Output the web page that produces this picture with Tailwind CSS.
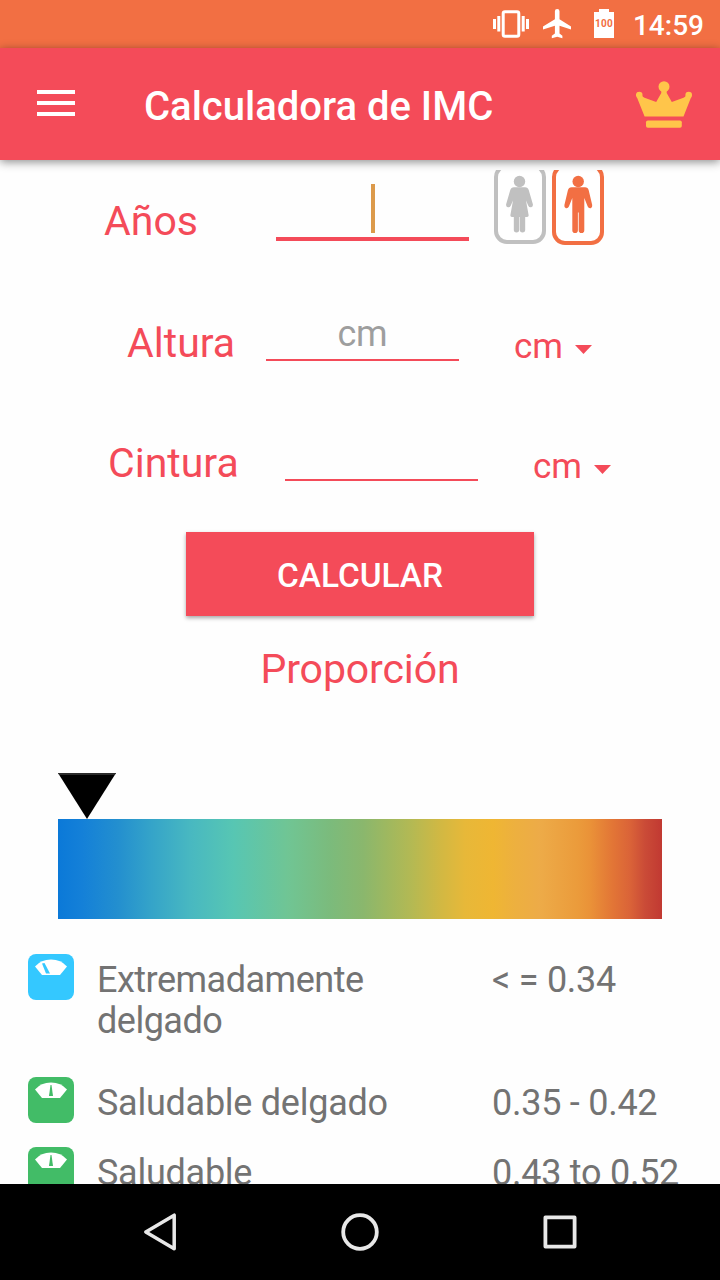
<!DOCTYPE html>
<html lang="es">

<head>
  <meta charset="UTF-8" />
  <meta name="viewport" content="width=device-width, initial-scale=1.0" />
  <title>Calculadora de IMC</title>
  <script src="https://cdn.jsdelivr.net/npm/@tailwindcss/browser@4"></script>
</head>

<body class="w-[720px] h-[1280px] flex flex-col overflow-hidden bg-[#fefefe] font-['Roboto',sans-serif] text-[#f44b59]">

  <!-- Status bar -->
  <div class="h-12 shrink-0 flex items-center justify-end bg-[#f26f43] pr-4 text-white">
    <svg class="w-9 h-12 mr-[14px]" viewBox="0 0 36 48" fill="currentColor">
      <rect x="10.200" y="11.700" width="15.600" height="24.600" rx="1.800" fill="none" stroke="currentColor" stroke-width="3" />
      <path d="M0 19h3v10H0zM4.300 16h3v15.500h-3zM28.700 16h3v15.500h-3zM33 19h3v10h-3z" />
    </svg>
    <svg class="w-7 h-12 mr-[23px]" viewBox="0 0 28 48" fill="currentColor">
      <path d="M28 29.500v-3L16.500 19.300v-8a2.300 2.300 0 0 0-4.600 0v8L0 26.500v3l11.900-3.700v7.700L8.800 35.800v2.400l5.400-1.400 5.200 1.400v-2.400l-2.900-2.300v-7.700z" />
    </svg>
    <div class="w-5 h-[29px] mr-[19px] mb-[1px] flex flex-col items-center">
      <div class="w-2.5 h-[3px] bg-white"></div>
      <div class="w-5 h-[26px] bg-white text-center text-[10px] leading-[24px] font-bold text-[#f26f43] tracking-[0.3px]">100</div>
    </div>
    <span class="text-[28px] font-medium leading-none pt-[3px]">14:59</span>
  </div>

  <!-- App bar -->
  <header class="relative z-10 h-28 shrink-0 flex items-center bg-[#f44b59] pl-[37px] pr-[27px] text-white shadow-[0_2px_9px_rgba(0,0,0,0.45)]">
    <svg class="w-[38px] h-[26px] mb-[2px]" viewBox="0 0 38 26" fill="currentColor">
      <path d="M0 0h38v4H0zM0 11h38v4H0zM0 22h38v4H0z" />
    </svg>
    <h1 class="ml-[69px] grow text-[40px] leading-[48px] pt-1.5 font-medium">Calculadora de IMC</h1>
    <svg class="w-[57px] h-[47px]" viewBox="0 0 57 47" fill="#ffc54a">
      <circle cx="28" cy="5.700" r="5.500" />
      <circle cx="3.200" cy="14" r="3.300" />
      <circle cx="52.700" cy="14" r="3.300" />
      <path d="M.8 16L6 14.500q.6 1.500 2.500 2.200L20.200 21 25.300 12V9h5.400v3L35.800 21l11.700-4.300Q49.400 16 50 14.500l5.200 1.500L47.500 35.500H8.600z" />
      <rect x="10" y="39.500" width="35.800" height="7.200" rx="1.800" />
    </svg>
  </header>

  <main class="grow overflow-hidden pt-2.5">
    <div class="h-full overflow-hidden">

      <!-- Age and gender -->
      <div class="h-[120px] flex items-start pl-[104px]">
        <label class="w-[172px] pt-[27px] text-[41px] leading-[48px]">Años</label>
        <div class="w-[193px] h-[71px] flex justify-center pt-3.5 border-b-4 border-[#f44b59]">
          <div class="w-1 h-[49px] bg-[#dc9a4b]"></div>
        </div>
        <svg class="ml-[25px] w-[110px] h-[76px]" viewBox="0 0 110 76">
          <rect x="2" y="-4" width="48" height="76" rx="11" fill="#fff" stroke="#c0c0c0" stroke-width="4" />
          <g fill="#c0c0c0">
            <circle cx="25.500" cy="11.500" r="5.700" />
            <path d="M20 17.300h11q3 0 3.800 3l4 13.700q.6 2.600-1.600 3.300-2 .4-2.900-1.600L32 30.500 34.600 45q.3 2-1.500 2h-1.900v12.700a2.700 2.700 0 0 1-5.400 0V47h-.6v12.700a2.700 2.700 0 0 1-5.400 0V47h-1.900q-1.800 0-1.500-2L19 30.500l-2.300 5.200q-.9 2-2.900 1.600-2.200-.7-1.600-3.300l4-13.700q.8-3 3.800-3z" />
          </g>
          <rect x="60" y="-4" width="48" height="77" rx="11" fill="#fff" stroke="#f26f43" stroke-width="4" />
          <g fill="#f26f43">
            <circle cx="84.200" cy="11.500" r="5.700" />
            <path d="M78 17.300h13q3 0 3.700 3l3.500 14.700q.4 2.500-1.500 3.200-2.200.4-3-1.700L90.300 28v32.200a2.700 2.700 0 0 1-5.600 0V42.500h-.8v17.700a2.700 2.700 0 0 1-5.600 0V28l-3.400 8.500q-.9 2.100-3 1.700-2-.7-1.500-3.200l3.500-14.700q.8-3 3.700-3z" />
          </g>
        </svg>
      </div>

      <!-- Height -->
      <div class="h-[120px] flex items-start pl-[127px]">
        <label class="w-[139px] pt-[29px] text-[41px] leading-[48px]">Altura</label>
        <div class="w-[193px] h-[71px] border-b-2 border-[#f44b59] pt-[23px] text-center text-[36px] leading-[42px] tracking-[-0.3px] text-[#9e9e9e]">cm</div>
        <span class="w-[61px] ml-[55px] pt-[36px] text-[35px] leading-[42px]">cm</span>
        <svg class="w-[17px] h-[9px] mt-[55px]" viewBox="0 0 17 9" fill="currentColor">
          <path d="M0 0h17L8.500 9z" />
        </svg>
      </div>

      <!-- Waist -->
      <div class="h-[122px] flex items-start pl-[108px]">
        <label class="w-[177px] pt-[29px] text-[41px] leading-[48px]">Cintura</label>
        <div class="w-[193px] h-[71px] border-b-2 border-[#f44b59]"></div>
        <span class="w-[61px] ml-[55px] pt-[36px] text-[35px] leading-[42px]">cm</span>
        <svg class="w-[17px] h-[9px] mt-[55px]" viewBox="0 0 17 9" fill="currentColor">
          <path d="M0 0h17L8.500 9z" />
        </svg>
      </div>

      <button class="block w-[348px] h-[84px] mx-auto pt-[5px] bg-[#f44b59] text-white text-[33.4px] font-medium shadow-[0_2px_4px_rgba(0,0,0,0.35)]">CALCULAR</button>

      <h2 class="mt-[29px] text-center text-[41px] leading-[48px] tracking-[-0.1px]">Proporción</h2>

      <!-- Ratio scale -->
      <div class="mt-20 px-[58px]">
        <svg class="block w-[58px] h-[46px]" viewBox="0 0 58 46">
          <path d="M0 0h58L29 46z" />
          <path d="M0 0h58l-1.200 2H1.200z" fill="#2b2b2b" />
        </svg>
        <div class="h-[100px] bg-[linear-gradient(to_right,#0b79d8_0px,#1480d8_24px,#238fcf_60px,#34a3c9_92px,#48b8c1_132px,#57c6b3_175px,#70c594_230px,#7bbb7c_272px,#8ab76d_305px,#9fb85f_330px,#b4b953_354px,#d1b843_382px,#e7b839_407px,#efb633_435px,#edb03f_457px,#edab48_482px,#eb9b3b_520px,#ea9238_532px,#e27536_555px,#da6338_572px,#ca4b37_587px,#c13932_604px)]"></div>
      </div>

      <!-- Ranges -->
      <ul class="mt-[35px] pl-7 text-[36px] leading-[41px] tracking-[-0.26px] text-[#737373]">
        <li class="h-[123px] flex items-start">
          <svg class="w-[46px] h-[46px] shrink-0" viewBox="0 0 46 46">
            <rect width="46" height="46" rx="8" fill="#34c8ff" />
            <path d="M7 12.500Q13 5.500 23 5.500t16 7L32 21H14z" fill="#fff" />
            <path d="M14 9.500l2.500-.5 5.500 10.500h-4z" fill="#34c8ff" />
          </svg>
          <span class="w-[418px] shrink-0 pl-[23px] pr-20 pt-1.5 tracking-[-0.5px]">Extremadamente delgado</span>
          <span class="pt-1.5">&lt; = 0.34</span>
        </li>
        <li class="h-[70px] flex items-start">
          <svg class="w-[46px] h-[46px] shrink-0" viewBox="0 0 46 46">
            <rect width="46" height="46" rx="8" fill="#42bc67" />
            <path d="M7 12.500Q13 5.500 23 5.500t16 7L32 21H14z" fill="#fff" />
            <path d="M22.500 8h1L25 19h-4z" fill="#42bc67" />
          </svg>
          <span class="w-[418px] shrink-0 pl-[23px] pt-1.5">Saludable delgado</span>
          <span class="pt-1.5">0.35 - 0.42</span>
        </li>
        <li class="h-[70px] flex items-start">
          <svg class="w-[46px] h-[46px] shrink-0" viewBox="0 0 46 46">
            <rect width="46" height="46" rx="8" fill="#42bc67" />
            <path d="M7 12.500Q13 5.500 23 5.500t16 7L32 21H14z" fill="#fff" />
            <path d="M22.500 8h1L25 19h-4z" fill="#42bc67" />
          </svg>
          <span class="w-[418px] shrink-0 pl-[23px] pt-1.5">Saludable</span>
          <span class="pt-1.5 whitespace-nowrap">0.43 to 0.52</span>
        </li>
      </ul>
    </div>
  </main>

  <!-- Navigation bar -->
  <nav class="h-24 shrink-0 flex items-center justify-between bg-black px-[140px]">
    <svg class="w-10 h-10" viewBox="0 0 40 40" fill="none" stroke="#e8e8e8" stroke-width="3.500" stroke-linejoin="round">
      <path d="M34.200 3.200v33.600L5.800 20z" />
    </svg>
    <svg class="w-10 h-10" viewBox="0 0 40 40" fill="none" stroke="#e8e8e8" stroke-width="3.800">
      <circle cx="20" cy="20" r="16.800" />
    </svg>
    <svg class="w-10 h-10" viewBox="0 0 40 40" fill="none" stroke="#e8e8e8" stroke-width="3.800" stroke-linejoin="round">
      <path d="M5.400 5.400h29.200v29.200H5.400z" />
    </svg>
  </nav>

</body>

</html>
